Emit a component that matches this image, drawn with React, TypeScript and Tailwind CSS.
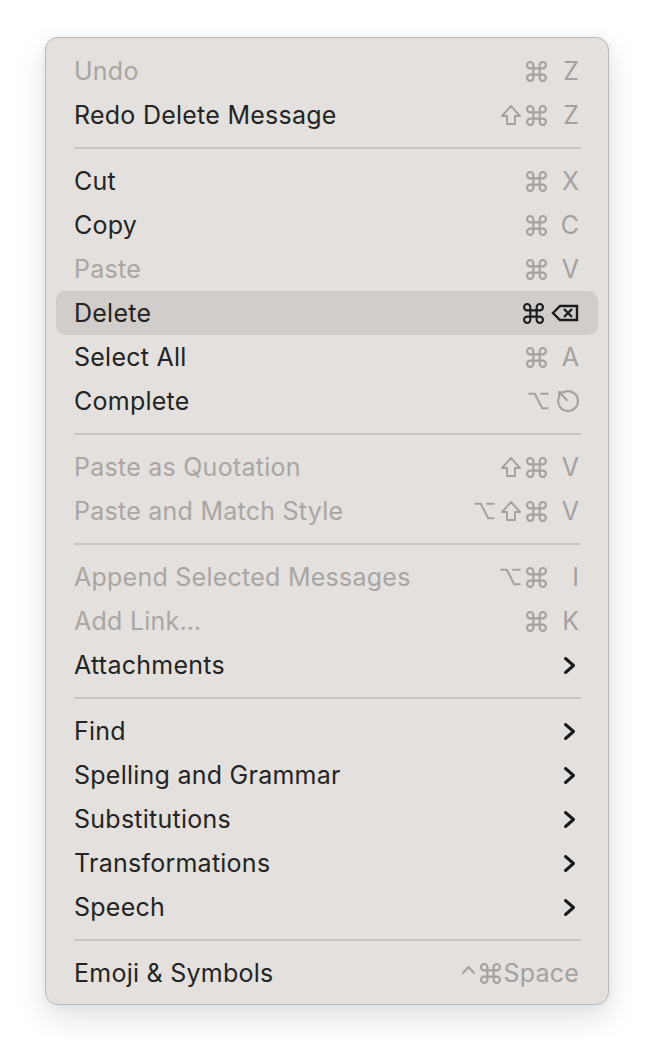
type Key = 'cmd' | 'shift' | 'opt' | 'del' | 'esc' | 'ctrl';

type Item =
  | { type: 'sep' }
  | {
      type?: 'item';
      label: string;
      disabled?: boolean;
      active?: boolean;
      mods?: Key[];
      letter?: string;
      tail?: Key;
      text?: string;
      submenu?: boolean;
    };

const ITEMS: Item[] = [
  { label: 'Undo', disabled: true, mods: ['cmd'], letter: 'Z' },
  { label: 'Redo Delete Message', mods: ['shift', 'cmd'], letter: 'Z' },
  { type: 'sep' },
  { label: 'Cut', mods: ['cmd'], letter: 'X' },
  { label: 'Copy', mods: ['cmd'], letter: 'C' },
  { label: 'Paste', disabled: true, mods: ['cmd'], letter: 'V' },
  { label: 'Delete', active: true, mods: ['cmd'], tail: 'del' },
  { label: 'Select All', mods: ['cmd'], letter: 'A' },
  { label: 'Complete', mods: ['opt'], tail: 'esc' },
  { type: 'sep' },
  { label: 'Paste as Quotation', disabled: true, mods: ['shift', 'cmd'], letter: 'V' },
  { label: 'Paste and Match Style', disabled: true, mods: ['opt', 'shift', 'cmd'], letter: 'V' },
  { type: 'sep' },
  { label: 'Append Selected Messages', disabled: true, mods: ['opt', 'cmd'], letter: 'I' },
  { label: 'Add Link…', disabled: true, mods: ['cmd'], letter: 'K' },
  { label: 'Attachments', submenu: true },
  { type: 'sep' },
  { label: 'Find', submenu: true },
  { label: 'Spelling and Grammar', submenu: true },
  { label: 'Substitutions', submenu: true },
  { label: 'Transformations', submenu: true },
  { label: 'Speech', submenu: true },
  { type: 'sep' },
  { label: 'Emoji & Symbols', mods: ['ctrl', 'cmd'], text: 'Space' },
];

// keyboard glyphs, drawn so the strokes match the mac menu glyphs
function KeyGlyph({ k }: { k: Key }) {
  const common = {
    fill: 'none',
    stroke: 'currentColor',
    strokeLinecap: 'round' as const,
    strokeLinejoin: 'round' as const,
  };
  if (k === 'cmd')
    return (
      <svg width="21" height="21" viewBox="2 2 20 20" {...common} strokeWidth={2}>
        <path d="M9 6a3 3 0 1 0-3 3h12a3 3 0 1 0-3-3v12a3 3 0 1 0 3-3H6a3 3 0 1 0 3 3z" />
      </svg>
    );
  if (k === 'shift')
    return (
      <svg width="22" height="20" viewBox="2 2 20 20" {...common} strokeWidth={1.9}>
        <path d="M8 21v-8H3l9-10 9 10h-5v8z" />
      </svg>
    );
  if (k === 'opt')
    return (
      <svg width="23" height="20" viewBox="0 0 24 22" {...common} strokeWidth={2.2} strokeLinecap="butt">
        <path d="M1 3h7l8 16h7" />
        <path d="M14 3h9" />
      </svg>
    );
  if (k === 'del')
    return (
      <svg width="28" height="18" viewBox="0 0 28 18" {...common} strokeWidth={2.4} strokeLinecap="butt" strokeLinejoin="miter">
        <path d="M2 9 9 2h17v14H9z" />
        <path d="m13 5 8 8M21 5l-8 8" />
      </svg>
    );
  if (k === 'esc')
    return (
      <svg width="22" height="22" viewBox="2 2 20 20" {...common} strokeWidth={1.9}>
        <path d="M9.5 3.4A9 9 0 1 1 3.4 9.5" />
        <path d="M4 4l7 7" />
        <path d="M4 9V4h5" />
      </svg>
    );
  return (
    <svg width="15" height="20" viewBox="0 0 15 20" {...common} strokeWidth={2}>
      <path d="M2 10 7.5 4 13 10" />
    </svg>
  );
}

function Chevron() {
  return (
    <svg width="13" height="19" viewBox="0 0 13 19" fill="none" stroke="#1a1a1a" strokeWidth={3} strokeLinecap="round" strokeLinejoin="round">
      <path d="M2.5 2.5 10.5 9.5 2.5 16.5" />
    </svg>
  );
}

function Row({ item }: { item: Exclude<Item, { type: 'sep' }> }) {
  const labelColor = item.disabled ? 'text-[#a9a6a3]' : 'text-[#242424]';
  const keyColor = item.active ? 'text-[#1c1c1c]' : 'text-[#a5a19e]';
  return (
    <div
      className={`h-[44px] flex items-center justify-between pl-[18px] pr-[19px] rounded-[9px] ${
        item.active ? 'bg-[#d1cdca]' : ''
      }`}
    >
      <span className={`text-[25px] leading-none tracking-[0.25px] ${labelColor}`}>{item.label}</span>

      {item.submenu ? (
        <span className="mr-[3px]">
          <Chevron />
        </span>
      ) : (
        <div className={`flex items-center ${keyColor}`}>
          <div className="flex items-center gap-[4px]">
            {item.mods?.map((m, i) => (
              <KeyGlyph key={i} k={m} />
            ))}
          </div>
          {item.letter && (
            <span className="w-[32px] text-right text-[25px] leading-none">{item.letter}</span>
          )}
          {item.tail && (
            <span className="ml-[7px] flex items-center">
              <KeyGlyph k={item.tail} />
            </span>
          )}
          {item.text && <span className="ml-[3px] text-[25px] leading-none tracking-[0.2px]">{item.text}</span>}
        </div>
      )}
    </div>
  );
}

export default function App() {
  return (
    <div
      className="min-h-screen bg-white pt-[37px] pl-[45px]"
      style={{ fontFamily: 'Inter, "Noto Sans", sans-serif' }}
    >
      <div className="w-[564px] rounded-[13px] bg-[#e3e0dd] border border-[#bcb9b6] shadow-[0_12px_30px_rgba(0,0,0,0.13),0_0_8px_rgba(0,0,0,0.05)] px-[10px] pt-[11px] pb-[9px]">
        {ITEMS.map((item, i) =>
          item.type === 'sep' ? (
            <div key={i} className="h-[22px] flex items-center pl-[18px] pr-[17px]">
              <div className="h-[2px] w-full bg-[#cac6c3]" />
            </div>
          ) : (
            <Row key={i} item={item} />
          )
        )}
      </div>
    </div>
  );
}
